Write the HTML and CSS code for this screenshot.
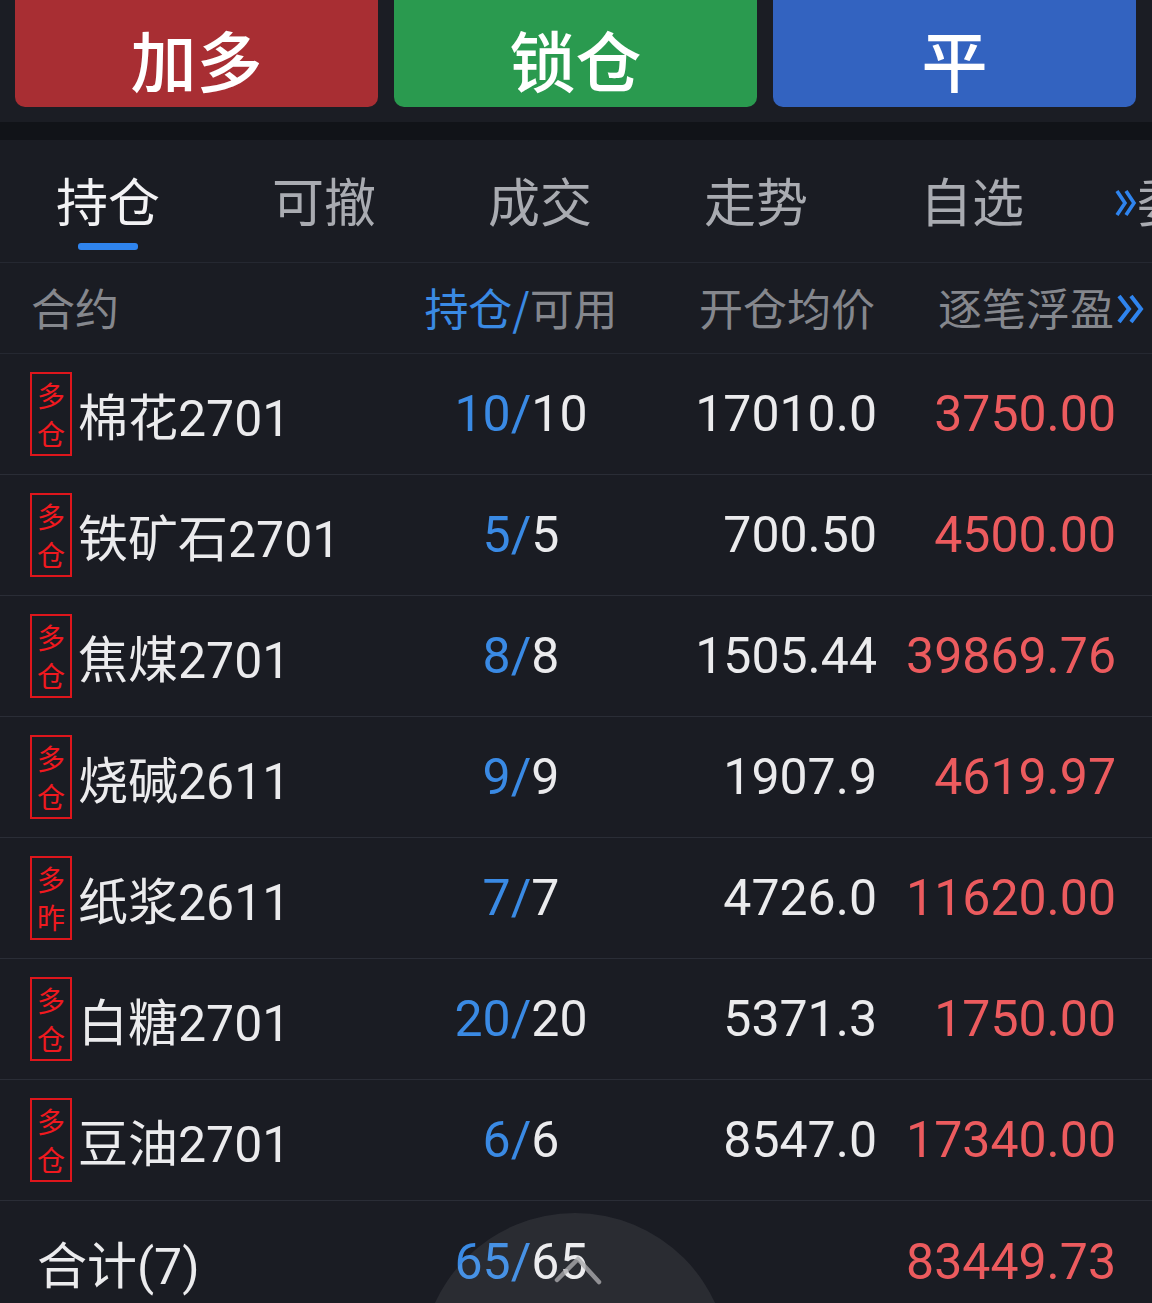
FILE: index.html
```html
<!DOCTYPE html>
<html lang="zh">
<head>
<meta charset="utf-8">
<title>持仓</title>
<link rel="stylesheet" href="styles.css">
</head>
<body>
<div class="page">
  <div class="actions">
    <div class="btn btn-red">加多</div>
    <div class="btn btn-green">锁仓</div>
    <div class="btn btn-blue">平</div>
  </div>
  <div class="strip"></div>
  <div class="tabs">
    <div class="tab active"><span>持仓</span><i class="bar"></i></div>
    <div class="tab">可撤</div>
    <div class="tab">成交</div>
    <div class="tab">走势</div>
    <div class="tab">自选</div>
    <div class="tab more"><svg class="tchev" width="22" height="40" viewBox="0 0 22 40"><path d="M2 8 L10 20 L2 32 M11 8 L19 20 L11 32" fill="none" stroke="#2f84ee" stroke-width="3.6" stroke-linejoin="miter"/></svg><span>委托</span></div>
  </div>
  <div class="thead grid">
    <div class="c1 hname">合约</div>
    <div class="c2"><span class="blue">持仓/</span>可用</div>
    <div class="c3">开仓均价</div>
    <div class="c4">逐笔浮盈<svg class="hchev" width="30" height="36" viewBox="0 0 30 36"><path d="M3 5 L13 18 L3 31 M15 5 L25 18 L15 31" fill="none" stroke="#2f84ee" stroke-width="4" stroke-linejoin="miter"/></svg></div>
  </div>
  <div class="row grid">
    <div class="c1"><span class="badge"><b>多</b><b>仓</b></span><span class="name">棉花2701</span></div>
    <div class="c2"><span class="blue">10/</span>10</div>
    <div class="c3">17010.0</div>
    <div class="c4 red">3750.00</div>
  </div>
  <div class="row grid">
    <div class="c1"><span class="badge"><b>多</b><b>仓</b></span><span class="name">铁矿石2701</span></div>
    <div class="c2"><span class="blue">5/</span>5</div>
    <div class="c3">700.50</div>
    <div class="c4 red">4500.00</div>
  </div>
  <div class="row grid">
    <div class="c1"><span class="badge"><b>多</b><b>仓</b></span><span class="name">焦煤2701</span></div>
    <div class="c2"><span class="blue">8/</span>8</div>
    <div class="c3">1505.44</div>
    <div class="c4 red">39869.76</div>
  </div>
  <div class="row grid">
    <div class="c1"><span class="badge"><b>多</b><b>仓</b></span><span class="name">烧碱2611</span></div>
    <div class="c2"><span class="blue">9/</span>9</div>
    <div class="c3">1907.9</div>
    <div class="c4 red">4619.97</div>
  </div>
  <div class="row grid">
    <div class="c1"><span class="badge"><b>多</b><b>昨</b></span><span class="name">纸浆2611</span></div>
    <div class="c2"><span class="blue">7/</span>7</div>
    <div class="c3">4726.0</div>
    <div class="c4 red">11620.00</div>
  </div>
  <div class="row grid">
    <div class="c1"><span class="badge"><b>多</b><b>仓</b></span><span class="name">白糖2701</span></div>
    <div class="c2"><span class="blue">20/</span>20</div>
    <div class="c3">5371.3</div>
    <div class="c4 red">1750.00</div>
  </div>
  <div class="row grid">
    <div class="c1"><span class="badge"><b>多</b><b>仓</b></span><span class="name">豆油2701</span></div>
    <div class="c2"><span class="blue">6/</span>6</div>
    <div class="c3">8547.0</div>
    <div class="c4 red">17340.00</div>
  </div>
  <div class="row total grid">
    <div class="c1 tname">合计(7)</div>
    <div class="c2"><span class="blue">65/</span>65</div>
    <div class="c3"></div>
    <div class="c4 red">83449.73</div>
  </div>
  <div class="fab">
    <svg class="fab-icon" width="48" height="30" viewBox="0 0 48 30"><path d="M3 25 L24 4 L45 27" fill="none" stroke="rgba(170,170,172,0.8)" stroke-width="4.5" stroke-linecap="round" stroke-linejoin="round"/></svg>
  </div>
</div>
</body>
</html>
```

FILE: styles.css
```css
* { box-sizing: border-box; }
html, body {
  margin: 0;
  padding: 0;
  background: #1a1c23;
}
body {
  font-family: Roboto, "Noto Sans CJK SC", sans-serif;
  color: #ececee;
  overflow: hidden;
}
.page {
  position: relative;
  width: 1152px;
  height: 1303px;
  overflow: hidden;
  background: #1a1c23;
}
.actions {
  display: flex;
  gap: 16px;
  padding: 0 16px 15px 15px;
  background: #1b1d24;
  height: 122px;
}
.btn {
  width: 363px;
  height: 107px;
  border-radius: 0 0 10px 10px;
  display: flex;
  align-items: center;
  justify-content: center;
  font-family: "Noto Sans CJK SC", sans-serif;
  font-size: 66px;
  font-weight: 500;
  color: #ffffff;
  padding-top: 8px;
}
.btn-red { background: #a82e33; }
.btn-green { background: #2a9a4f; }
.btn-blue { background: #3363c0; }
.strip {
  height: 18px;
  background: #111318;
}
.tabs {
  display: flex;
  height: 123px;
  border-bottom: 1px solid #252831;
  overflow: hidden;
}
.tab {
  flex: 0 0 216px;
  position: relative;
  text-align: center;
  font-family: "Noto Sans CJK SC", sans-serif;
  font-size: 52px;
  line-height: 60px;
  padding-top: 30px;
  color: #a9abb1;
}
.tab.active { color: #f2f2f4; }
.tab .bar {
  position: absolute;
  left: 78px;
  top: 103px;
  width: 60px;
  height: 7px;
  border-radius: 3px;
  background: #2f84ee;
}
.tab.more {
  display: flex;
  align-items: center;
  align-self: flex-start;
  height: 90px;
  text-align: left;
  padding-left: 35px;
  white-space: nowrap;
  color: #a9abb1;
}
.tchev {
  flex: 0 0 auto;
  margin-top: 6px;
}
.grid {
  display: grid;
  grid-template-columns: 380px 222px 245px 239px;
  padding: 0 32px 0 30px;
  align-items: center;
}
.c2 { text-align: center; }
.c3, .c4 { text-align: right; white-space: nowrap; }
.thead {
  height: 91px;
  border-bottom: 1px solid #252831;
  font-family: "Noto Sans CJK SC", sans-serif;
  font-size: 44px;
  color: #85878d;
  padding-bottom: 2px;
}
.thead .c4 {
  display: flex;
  justify-content: flex-end;
  align-items: center;
}
.thead .c3 { margin-right: 2px; }
.hname { margin-left: 1px; }
.hchev {
  flex: 0 0 auto;
  margin-right: -32px;
  margin-left: 2px;
  margin-top: 4px;
}
.thead .c4 { margin-right: 2px; }
.row {
  height: 121px;
  border-bottom: 1px solid #2a2d36;
  font-size: 50px;
  color: #ebebed;
}
.row .c1 {
  display: flex;
  align-items: center;
  gap: 6px;
}
.badge {
  width: 42px;
  height: 84px;
  border: 2px solid #de161c;
  display: flex;
  flex-direction: column;
  align-items: center;
  justify-content: center;
  font-family: "Noto Sans CJK SC", sans-serif;
  font-size: 28px;
  line-height: 38px;
  color: #f0191f;
}
.badge b { font-weight: 400; }
.name {
  font-family: Roboto, "Noto Sans CJK SC", sans-serif;
  white-space: nowrap;
}
.blue { color: #3a8ae4; }
.red { color: #ec5b5e; }
.row.total {
  border-bottom: none;
}
.row .tname {
  padding-left: 7px;
  font-size: 50px;
}
.fab {
  position: absolute;
  left: 421px;
  top: 1213px;
  width: 308px;
  height: 308px;
  border-radius: 50%;
  background: rgba(255, 255, 255, 0.07);
}
.fab-icon {
  position: absolute;
  left: 133px;
  top: 42px;
}
```
